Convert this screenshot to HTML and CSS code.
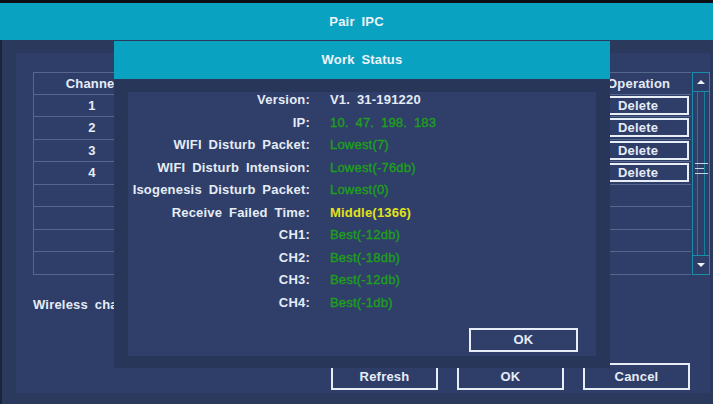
FILE: index.html
```html
<!DOCTYPE html>
<html lang="en">

<head>
    <meta charset="UTF-8">
    <title>Pair IPC</title>
    <link rel="stylesheet" href="styles.css">
</head>

<body>
    <div class="window">
        <div class="title">Pair IPC</div>
        <div class="body">
            <div class="panel">
                <div class="list">
                    <div class="table">
                        <div class="row head"><div class="ch">Channel</div><div class="mid"></div><div class="op">Operation</div></div>
                        <div class="row"><div class="ch">1</div><div class="mid"></div><div class="op"><span class="del">Delete</span></div></div>
                        <div class="row"><div class="ch">2</div><div class="mid"></div><div class="op"><span class="del">Delete</span></div></div>
                        <div class="row"><div class="ch">3</div><div class="mid"></div><div class="op"><span class="del">Delete</span></div></div>
                        <div class="row"><div class="ch">4</div><div class="mid"></div><div class="op"><span class="del">Delete</span></div></div>
                        <div class="row"><div class="ch"></div><div class="mid"></div><div class="op"></div></div>
                        <div class="row"><div class="ch"></div><div class="mid"></div><div class="op"></div></div>
                        <div class="row"><div class="ch"></div><div class="mid"></div><div class="op"></div></div>
                        <div class="row"><div class="ch"></div><div class="mid"></div><div class="op"></div></div>
                    </div>
                    <div class="scroll">
                        <div class="sbtn"><span class="arrow up"></span></div>
                        <div class="track"><span class="thumb"></span></div>
                        <div class="sbtn"><span class="arrow down"></span></div>
                    </div>
                </div>
                <div class="wireless">Wireless channel</div>
                <div class="actions">
                    <div class="btn">Refresh</div>
                    <div class="btn">OK</div>
                    <div class="btn">Cancel</div>
                </div>
            </div>
        </div>
    </div>

    <div class="dialog">
        <div class="title">Work Status</div>
        <div class="dbody">
            <div class="dpanel">
                <div class="info">
                    <div class="lbl">Version:</div><div class="val">V1. 31-191220</div>
                    <div class="lbl">IP:</div><div class="val green">10. 47. 198. 183</div>
                    <div class="lbl">WIFI Disturb Packet:</div><div class="val green">Lowest(7)</div>
                    <div class="lbl">WIFI Disturb Intension:</div><div class="val green">Lowest(-76db)</div>
                    <div class="lbl">Isogenesis Disturb Packet:</div><div class="val green">Lowest(0)</div>
                    <div class="lbl">Receive Failed Time:</div><div class="val yellow">Middle(1366)</div>
                    <div class="lbl">CH1:</div><div class="val green">Best(-12db)</div>
                    <div class="lbl">CH2:</div><div class="val green">Best(-18db)</div>
                    <div class="lbl">CH3:</div><div class="val green">Best(-12db)</div>
                    <div class="lbl">CH4:</div><div class="val green">Best(-1db)</div>
                </div>
                <div class="dfoot">
                    <div class="btn small">OK</div>
                </div>
            </div>
        </div>
    </div>
</body>

</html>
```

FILE: styles.css
```css
body {
    margin: 0;
    background: #0c0f16;
    font-family: "Liberation Sans", Arial, sans-serif;
    font-size: 13px;
    font-weight: bold;
    letter-spacing: 0.2px;
    word-spacing: 3px;
    color: #e6ecf6;
    width: 713px;
    height: 404px;
    overflow: hidden;
    position: relative;
}

.window {
    margin-top: 3px;
    height: 401px;
    display: flex;
    flex-direction: column;
}

.title {
    background: #0aa2c1;
    height: 37px;
    line-height: 37px;
    text-align: center;
    color: #eef4fa;
}

.body {
    flex: 1;
    background: #2a395c;
    border-left: 2px solid #1b2438;
    padding: 13px 4px 11px 14px;
    display: flex;
}

.panel {
    flex: 1;
    background: #2e3e69;
    padding: 19px 0 0 17px;
    display: flex;
    flex-direction: column;
}

.list {
    display: flex;
}

.table {
    width: 657px;
    border-left: 1px solid #56678e;
    border-top: 1px solid #56678e;
}

.row {
    display: grid;
    grid-template-columns: 118px 1fr 90px;
    height: 22.5px;
    border-bottom: 1px solid #56678e;
    box-sizing: border-box;
    align-items: center;
}

.row.head {
    height: 21.5px;
}

.ch {
    text-align: center;
    padding-right: 2px;
}

.op {
    padding-left: 7px;
}

.del {
    display: block;
    width: 81px;
    height: 19px;
    box-sizing: border-box;
    border: 2px solid #e8eef6;
    line-height: 15px;
    padding-left: 8px;
}

.row.head .op {
    padding-left: 6px;
}

.scroll {
    width: 18px;
    height: 203px;
    border: 1px solid #1a8ea9;
    box-sizing: border-box;
    display: flex;
    flex-direction: column;
    margin-left: 1px;
}

.sbtn {
    height: 18px;
    border-bottom: 1px solid #1a8ea9;
    display: flex;
    align-items: center;
    justify-content: center;
}

.sbtn:last-child {
    border-bottom: none;
    border-top: 1px solid #1a8ea9;
}

.arrow {
    width: 0;
    height: 0;
    border-left: 4px solid transparent;
    border-right: 4px solid transparent;
}

.arrow.up {
    border-bottom: 4px solid #f0f4fa;
}

.arrow.down {
    border-top: 4px solid #f0f4fa;
}

.track {
    flex: 1;
    margin: 0 4px;
    border-left: 1px solid #1a7f9b;
    border-right: 1px solid #1a7f9b;
    display: flex;
    align-items: center;
    justify-content: center;
}

.thumb {
    flex: none;
    width: 13px;
    height: 11px;
    margin-top: -10px;
    border-top: 1px solid #c8d2e2;
    border-bottom: 1px solid #c8d2e2;
    background: linear-gradient(#c8d2e2, #c8d2e2) left center / 9px 1px no-repeat;
    box-sizing: border-box;
}

.wireless {
    margin-top: 22px;
    height: 16px;
    line-height: 16px;
}

.actions {
    display: flex;
    gap: 19px;
    margin: 50px 0 0 298px;
}

.btn {
    width: 107px;
    height: 27px;
    box-sizing: border-box;
    border: 2px solid #e8eef6;
    text-align: center;
    line-height: 24px;
}

.dialog {
    position: absolute;
    left: 114px;
    top: 41px;
    width: 496px;
    height: 327px;
    display: flex;
    flex-direction: column;
}

.dialog .title {
    height: 38px;
    line-height: 38px;
}

.dbody {
    flex: 1;
    background: #283759;
    padding: 13px 14px 12px 14px;
    display: flex;
}

.dpanel {
    flex: 1;
    background: #2f3f6a;
    display: flex;
    flex-direction: column;
}

.info {
    display: grid;
    grid-template-columns: 182px 1fr;
    column-gap: 20px;
    row-gap: 6.5px;
    line-height: 16px;
}

.lbl {
    text-align: right;
}

.green {
    color: #1f9e1c;
    font-weight: normal;
    -webkit-text-stroke: 0.4px #1f9e1c;
}

.yellow {
    color: #e2e21a;
}

.dfoot {
    margin-top: auto;
    padding: 0 18px 4px 0;
    display: flex;
    justify-content: flex-end;
}

.btn.small {
    width: 109px;
    height: 24px;
    line-height: 20px;
}
```
